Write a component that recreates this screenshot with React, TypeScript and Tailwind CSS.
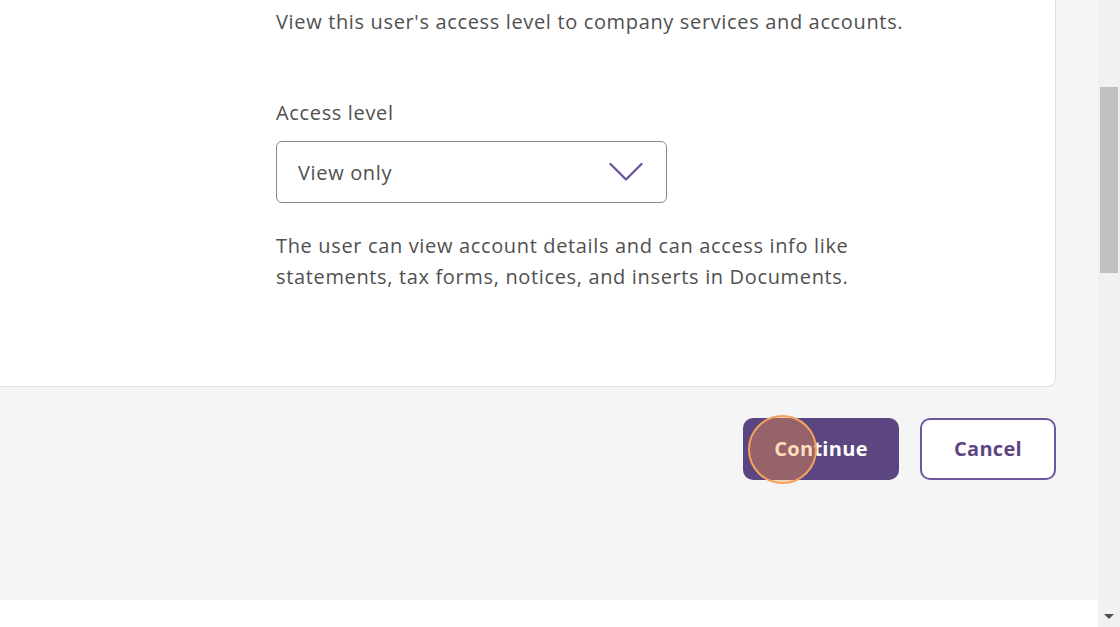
import React from 'react';

const font = { fontFamily: '"Open Sans", "Noto Sans", sans-serif' };

const Chevron = () => (
  <svg width="34" height="20" viewBox="0 0 34 20" fill="none">
    <path d="M1.5 2 L17 17.5 L32.5 2" stroke="#6b4f9a" strokeWidth="2.2" strokeLinecap="round" strokeLinejoin="round" />
  </svg>
);

export default function App() {
  return (
    <div className="flex h-[627px] w-[1120px] overflow-hidden text-[#505050]" style={font}>
      <div className="flex flex-1 flex-col bg-[#f5f5f5]">
        {/* card */}
        <div className="mr-[42px] h-[387px] rounded-br-lg border-r border-b border-[#e0e0e0] bg-white pl-[276px] pt-[6px] text-[20px] leading-[31px] tracking-[0.65px]">
          <p>View this user's access level to company services and accounts.</p>
          <label className="mt-[60px] block">Access level</label>
          <div className="mt-[13px] flex h-[62px] w-[391px] items-center justify-between rounded-md border border-[#8a8a8a] pl-[21px] pr-[23px]">
            <span>View only</span>
            <Chevron />
          </div>
          <p className="mt-[27px]">
            The user can view account details and can access info like
            <br />
            statements, tax forms, notices, and inserts in Documents.
          </p>
        </div>

        {/* actions */}
        <div className="mr-[42px] mt-[31px] flex justify-end gap-[21px]">
          <div className="relative">
            <button className="h-[62px] w-[156px] rounded-[10px] bg-[#5c4682] text-[20px] font-bold tracking-[0.3px] text-white">
              Continue
            </button>
            <span className="pointer-events-none absolute left-[5px] top-[-3px] h-[69px] w-[69px] rounded-full border-2 border-[#f4a35c] bg-[#ff9a3c]/35" />
          </div>
          <button className="h-[62px] w-[136px] rounded-[10px] border-[2.5px] border-[#6f56a0] bg-white text-[20px] font-bold tracking-[0.3px] text-[#5c4682]">
            Cancel
          </button>
        </div>

        <div className="mt-auto h-[27px] bg-white" />
      </div>

      {/* scrollbar */}
      <div className="relative flex w-[22px] flex-col bg-[#f1f1f1]">
        <div className="ml-[2px] mt-[87px] h-[186px] w-[18px] bg-[#c1c1c1]" />
        <div className="mt-auto flex h-[20px] items-center justify-center pb-[2px]">
          <div className="h-0 w-0 border-x-[5px] border-t-[5px] border-x-transparent border-t-[#505050]" />
        </div>
      </div>
    </div>
  );
}
